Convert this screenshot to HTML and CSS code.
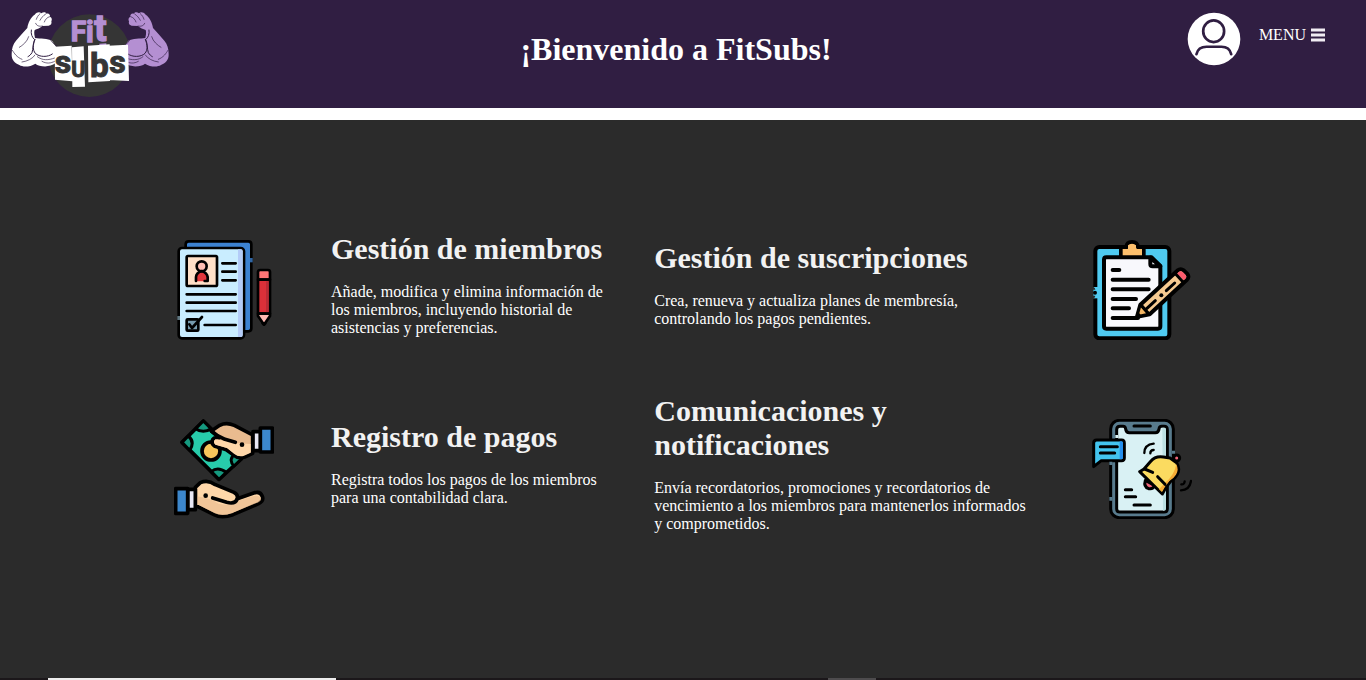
FILE: index.html
```html
<!DOCTYPE html>
<html lang="es">
<head>
<meta charset="utf-8">
<meta name="viewport" content="width=device-width, initial-scale=1">
<title>FitSubs</title>
<link rel="stylesheet" href="styles.css">
</head>
<body>
<header class="header">
  <a class="brand" href="#" aria-label="FitSubs">
    <svg class="logo" viewBox="30 30 480 270" role="img" aria-label="Fit Subs">
      <defs>
        <g id="arm">
          <path d="M82 84C84 68 92 52 104 44C111 36 119 35 124 40C130 35 137 36 139 41C146 38 151 44 150 50C157 54 156 60 154 64C156 71 153 76 146 77L127 78C122 84 110 88 104 90C101 98 104 108 105 114C120 116 144 116 156 122L168 140L166 190C150 203 118 201 106 191C90 201 69 202 58 195C46 190 34 181 35 163C35 145 39 133 48 122C58 112 70 96 82 84Z"/>
          <g fill="none" stroke="#301e42" stroke-width="3" stroke-linecap="round">
            <path d="M94 90C92 102 96 112 104 119C98 130 100 146 96 158C92 164 88 168 84 170M105 118C98 136 98 150 106 160C118 172 144 172 157 162"/>
            <path stroke-width="2" d="M120 41C114 46 111 52 109 58M137 42C129 47 124 54 120 61M149 50C141 52 136 58 133 66M107 70C110 78 118 80 127 78M86 110C82 125 68 136 58 142M37 151C43 160 50 172 66 178M105 165C98 176 82 184 66 186M112 170C126 182 146 181 164 174M152 120C158 130 166 137 174 139M126 184C140 192 152 190 164 184"/>
          </g>
        </g>
      </defs>
      <circle cx="268" cy="167" r="124" fill="#353535"/>
      <use href="#arm" fill="#fff"/>
      <use href="#arm" fill="#b48fd2" transform="translate(541 0) scale(-1 1)"/>
      <g fill="#b48fd2" stroke="#b48fd2" stroke-width="4">
        <text x="212" y="124" font-size="84">F</text>
        <text x="258" y="126" font-size="88">i</text>
        <text x="283" y="124" font-size="110">t</text>
      </g>
      <path fill="#b48fd2" d="M298 131L319 130V136H298Z"/>
      <path fill="#fff" d="M164 140L215 137L217 244L165 239ZM216 142L251 139L255 260L217 261ZM264 137L329 133L330 243L265 247ZM324 137L384 134L387 243L326 240Z"/>
      <g fill="#353535" stroke="#353535" stroke-width="3">
        <text x="164" y="220" font-size="96">s</text>
        <text x="214" y="230" font-size="64">U</text>
        <text x="270" y="231" font-size="100">b</text>
        <text x="328" y="219" font-size="96">s</text>
      </g>
    </svg>
  </a>
  <h1 class="title">¡Bienvenido a FitSubs!</h1>
  <nav class="nav" aria-label="Principal">
    <a class="avatar" href="#" aria-label="Perfil">
      <svg viewBox="0 0 160 160" aria-hidden="true">
        <circle cx="80" cy="80" r="78" fill="#fff"/>
        <g fill="none" stroke="#301e42" stroke-width="8" stroke-linecap="round">
          <ellipse cx="79" cy="57" rx="31" ry="32"/>
          <path d="M28 125C32 108 44 103 58 103H102C117 103 127 108 131 125"/>
        </g>
      </svg>
    </a>
    <button class="menu" type="button">MENU
      <svg class="bars" viewBox="0 0 14 14" aria-hidden="true"><path d="M0 2H14M0 7H14M0 12H14" stroke="#f1edf3" stroke-width="3"/></svg>
    </button>
  </nav>
</header>

<main class="main">
  <div class="features">
    <article class="feature">
      <svg class="icon" viewBox="27 30 300 300" aria-hidden="true">
        <g stroke="#000" stroke-width="8" stroke-linecap="round" stroke-linejoin="round">
          <path fill="#3c82d1" d="M62 55V43Q62 34 71 34H250Q259 34 259 43V295Q259 304 250 304H235"/>
          <rect x="41" y="54" width="196" height="271" rx="10" fill="#c9edff"/>
          <path d="M219 58H228Q233 58 233 64V315Q233 321 228 321H219Z" fill="#b4ccf8" stroke="none"/>
          <rect x="65" y="78" width="91" height="90" rx="4" fill="#ffe0c8"/>
          <path fill="#e2363b" stroke="none" d="M93 154V139Q96 124 110 124Q125 125 128 139V154Z"/>
          <circle cx="110" cy="109" r="15" fill="#ffbfb4"/>
          <path fill="none" d="M93 153V141Q94 128 110 123Q126 128 128 141V153H119"/>
          <path fill="none" d="M172 100H212M172 125H212M172 151H212M65 193H212M65 218H212M65 243H212M119 285H212"/>
          <rect x="65" y="268" width="35" height="34" rx="3" fill="#769aad"/>
          <path fill="none" d="M73 283L81 294L111 261"/>
          <path fill="#ff7676" d="M279 149V126Q279 120 286 120H309Q315 120 315 126V149Z"/>
          <path fill="#db3039" d="M279 149H315V251H279Z"/>
          <path fill="#b92b35" stroke="none" d="M303 154H311V247H303Z"/>
          <path fill="#ffb9b2" d="M279 251H315V258L297 284L279 258Z"/>
          <path d="M293 280H301L297 284Z"/>
        </g>
        <path fill="#5f7680" d="M37 258H45V270H37Z"/><path fill="#2f65a3" d="M255 84H263V97H255Z"/>
      </svg>
      <div class="text">
        <h2>Gestión de miembros</h2>
        <p>Añade, modifica y elimina información de los miembros, incluyendo historial de asistencias y preferencias.</p>
      </div>
    </article>

    <article class="feature">
      <div class="text">
        <h2>Gestión de suscripciones</h2>
        <p>Crea, renueva y actualiza planes de membresía, controlando los pagos pendientes.</p>
      </div>
      <svg class="icon" viewBox="36 30 300 300" aria-hidden="true">
        <g stroke="#000" stroke-width="12" stroke-linecap="round" stroke-linejoin="round">
          <rect x="46" y="51" width="222" height="274" rx="12" fill="#4fcaf0"/>
          <path fill="#f8f8fc" d="M72 89Q72 82 79 82H215L241 108V289Q241 296 234 296H79Q72 296 72 289Z"/>
          <path fill="#f8f8fc" d="M211 83V102Q211 109 218 109H241Z"/>
          <path fill="#fdbf6c" d="M123 80V59Q123 52 130 52H139Q140 36 156 36Q172 36 174 52H184Q191 52 191 59V80Z"/>
          <path fill="#fdbf6c" stroke="none" d="M128 76V57H144V46Q156 36 168 46V57H186V76Z"/>
          <path fill="none" d="M98 120H118M98 149H206M98 178H206M98 207H168M98 235H147M98 264H174"/>
          <path fill="#f6ca91" d="M171 260L181 224L292 122Q302 114 311 121L322 132Q329 141 320 150L209 253Z"/>
          <path fill="#fb5b6d" d="M296 126Q303 121 308 126L317 135Q322 141 316 147L311 151L291 131Z" stroke="none"/>
          <path fill="#f4b664" d="M171 260L181 224L206 252Z" stroke-width="8"/>
          <path fill="none" stroke-width="9" d="M285 130L311 158M184 226L207 252M200 236L226 212M259 182L284 159"/>
          <circle cx="244" cy="196" r="6" stroke="none"/>
          <path d="M171 260L175 250L182 257Z" stroke-width="4"/>
        </g>
        <path fill="#4fcaf0" d="M40 171H59V205H40Z"/><path fill="#2b2b2b" d="M36 171H40Q46 173 46 179H36ZM36 197H46Q46 203 40 205H36Z"/><circle cx="45" cy="188" r="6"/>
      </svg>
    </article>

    <article class="feature">
      <svg class="icon" viewBox="27 27 300 300" aria-hidden="true">
        <g stroke="#000" stroke-width="11" stroke-linecap="round" stroke-linejoin="round">
          <path fill="#27cbaa" d="M51 97L115 33L229 147L162 208Z"/>
          <path fill="#15997f" stroke-width="9" d="M92 56L115 33L138 56Q115 72 92 56ZM51 97L70 78Q91 96 74 121ZM139 185Q158 168 184 187L162 208ZM207 168Q188 149 211 130L229 147Z"/>
          <circle cx="138" cy="123" r="27" fill="#f7c65b"/>
          <path fill="#e9bb8f" d="M139 63L164 46Q184 36 208 46L263 75V130L239 141Q220 147 207 136L184 119L150 109Q137 101 143 89Q150 79 163 83Z"/>
          <path stroke="none" fill="#ffd7a9" d="M151 88L218 100L257 102V128L237 137Q221 142 207 131L186 114L151 104Q143 96 151 88Z"/>
          <path fill="none" d="M139 63L156 76L180 88L211 97"/>
          <circle cx="231" cy="104" r="7" stroke="none"/>
          <path fill="#e9e8f4" d="M264 65H287V122H264Z"/>
          <path fill="#3c87cc" d="M286 54H322V126H286Z"/>
          <path fill="#ffd7a9" d="M91 232L106 218Q129 208 151 224L207 247Q220 254 217 266L266 249Q286 242 292 259Q297 273 281 281L204 314Q170 326 147 314L91 286Z"/>
          <path stroke="none" fill="#e9bb8f" d="M96 259Q137 265 161 281Q204 291 219 272L264 259Q282 254 288 266Q290 273 277 278L201 309Q171 321 149 310L96 282Z" opacity=".65"/>
          <path fill="none" d="M143 264L185 277Q211 284 217 266"/>
          <circle cx="122" cy="257" r="7" stroke="none"/>
          <path fill="#e9e8f4" d="M68 238H91V299H68Z"/>
          <path fill="#3c87cc" d="M32 236H68V310H32Z"/>
        </g>
      </svg>
      <div class="text">
        <h2>Registro de pagos</h2>
        <p>Registra todos los pagos de los miembros para una contabilidad clara.</p>
      </div>
    </article>

    <article class="feature">
      <div class="text">
        <h2>Comunicaciones y notificaciones</h2>
        <p>Envía recordatorios, promociones y recordatorios de vencimiento a los miembros para mantenerlos informados y comprometidos.</p>
      </div>
      <svg class="icon" viewBox="36 27 300 300" aria-hidden="true">
        <g stroke="#000" stroke-width="9" stroke-linecap="round" stroke-linejoin="round">
          <rect x="92" y="31" width="188" height="292" rx="26" fill="#587b8d"/>
          <path fill="#d9f1f4" d="M120 49H129Q136 49 137 57Q138 68 148 68H226Q236 68 237 57Q238 49 245 49H252Q262 49 262 59V296Q262 306 252 306H120Q110 306 110 296V59Q110 49 120 49Z"/>
          <path stroke="none" fill="#bce0e3" d="M247 53H254Q258 53 258 60V294Q258 302 249 302Z"/>
          <path fill="none" d="M162 48H211M136 239H155M136 260H167M162 285H211"/>
          <path fill="none" stroke-width="7" d="M193 129Q193 104 221 101M211 130Q211 120 221 120M303 241Q329 241 333 213M304 223Q313 224 314 214"/>
          <path fill="#43c4ee" d="M41 99Q41 90 50 90H125Q133 90 133 99V144Q133 152 125 152H64L41 170Z"/>
          <path stroke="none" fill="#268fed" d="M119 94H125Q129 94 129 99V143Q129 148 119 148Z"/>
          <path fill="none" d="M61 110H112M61 129H104"/>
          <circle cx="290" cy="144" r="9" fill="#f2667b"/>
          <path fill="#f2667b" d="M196 211Q190 230 206 236Q219 239 224 226Z"/>
          <path fill="#fbdb60" d="M179 185L192 177L211 155Q226 137 250 141L270 144L290 158Q301 177 292 193Q285 207 272 214L258 232L247 252Z"/>
          <path stroke="none" fill="#f6ac36" d="M289 162Q297 180 288 194Q280 206 268 213L255 230L246 246L237 238L254 220Q284 195 289 162Z"/>
          <path fill="none" d="M194 177L218 187M233 200L255 223"/>
        </g>
        <path fill="#587b8d" d="M88 155H97V165H88ZM88 261H97V272H88ZM276 122H285V131H276Z"/><path fill="#d9f1f4" d="M106 75H114V84H106Z"/>
      </svg>
    </article>
  </div>
</main>
<footer class="strip" aria-hidden="true"><span class="strip-field"></span><span class="strip-tab"></span></footer>
</body>
</html>
```
FILE: styles.css
```css
* { box-sizing: border-box; }

body {
  display: flex;
  flex-direction: column;
  min-height: 100vh;
  margin: 0;
  background: #fff;
  color: #fff;
  font-family: "Liberation Serif", "Times New Roman", serif;
}

.header {
  display: grid;
  grid-template-columns: 1fr auto 1fr;
  align-items: start;
  margin-bottom: 12px;
  padding: 10px 24px 8px 10px;
  background: #301e42;
}

.brand, .logo, .avatar svg, .icon { display: block; }
.brand { width: 160px; }
.logo { width: 160px; height: 90px; }
.logo text { font-family: Roboto, "Liberation Sans", sans-serif; font-weight: bold; }

.title {
  margin: 0;
  padding-top: 21px;
  font-size: 32px;
  line-height: 36px;
}

.nav {
  display: flex;
  justify-content: flex-end;
  align-items: flex-start;
  gap: 18px;
  padding: 2px 17px 0 0;
}

.avatar { width: 54px; }

.menu {
  display: flex;
  align-items: center;
  gap: 5px;
  padding: 14px 0 0;
  border: 0;
  background: none;
  color: inherit;
  font: 16px/18px "Liberation Serif", "Times New Roman", serif;
  cursor: pointer;
}

.bars { width: 14px; height: 14px; }

.main {
  flex: 1;
  padding: 112px 24px 48px;
  background: #2b2b2b;
}

.features {
  display: grid;
  grid-template-columns: 4fr 5fr;
  gap: 46px 50px;
  max-width: 1018px;
  margin: 0 auto;
}

.feature {
  display: flex;
  align-items: center;
  gap: 57px;
}

.icon {
  flex: none;
  width: 100px;
  height: 100px;
}

.text {
  flex: 1;
  padding-bottom: 11px;
}

.text h2 {
  margin: 0 0 17px;
  color: #f2f2f2;
  font-size: 30px;
  line-height: 34px;
}

.text p {
  margin: 0;
  font-size: 16px;
  line-height: 18px;
}

.strip {
  display: flex;
  height: 2px;
  background: #1b171a;
}

.strip-field {
  width: 288px;
  margin-left: 48px;
  background: #ededed;
}

.strip-tab {
  width: 48px;
  margin-left: 492px;
  background: #4d4b4d;
}
```
